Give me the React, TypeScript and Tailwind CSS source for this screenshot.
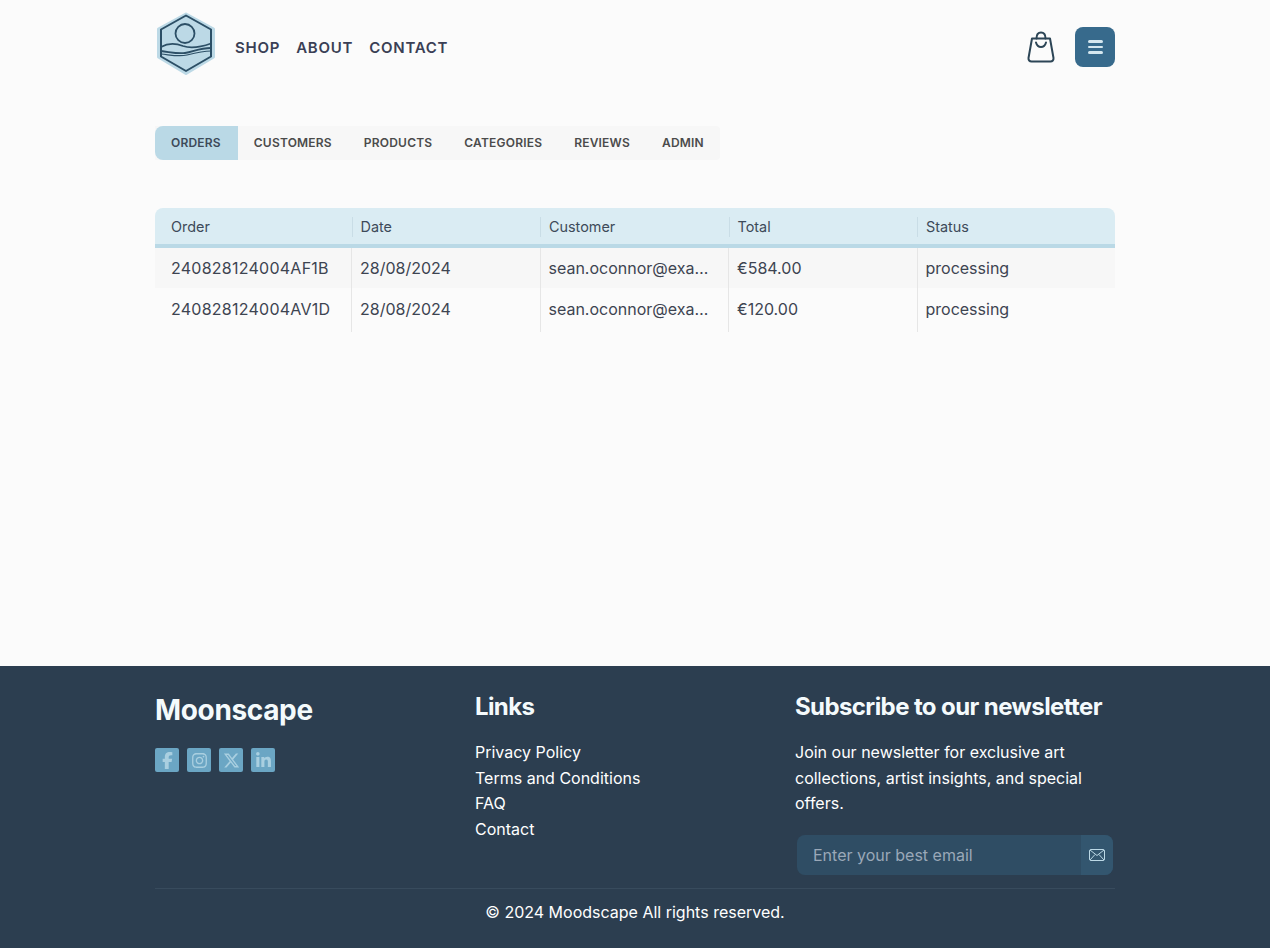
import React from 'react';
import { FaFacebookF, FaInstagram, FaLinkedinIn, FaXTwitter } from 'react-icons/fa6';

const tabs = ['Orders', 'Customers', 'Products', 'Categories', 'Reviews', 'Admin'];
const columns = [
  { label: 'Order', width: 'w-[196.5px]' },
  { label: 'Date', width: 'w-[188.5px]' },
  { label: 'Customer', width: 'w-[188.5px]' },
  { label: 'Total', width: 'w-[188.5px]' },
  { label: 'Status', width: '' },
];
const orders = [
  { id: '240828124004AF1B', date: '28/08/2024', customer: 'sean.oconnor@example.com', total: '€584.00', status: 'processing' },
  { id: '240828124004AV1D', date: '28/08/2024', customer: 'sean.oconnor@example.com', total: '€120.00', status: 'processing' },
];
const footerLinks = ['Privacy Policy', 'Terms and Conditions', 'FAQ', 'Contact'];

const Logo = () => (
  <svg className="mb-2" width="62" height="64" viewBox="0 0 62 64" fill="none">
    <path d="M31 3 L58.5 18 V46 L31 62.5 L3.5 46 V18 Z" fill="#bcd9e6" stroke="#bcd9e6" strokeWidth="3" strokeLinejoin="round" />
    <path d="M31 4.5 L56 18.5 V45.5 L31 60 L6 45.5 V18.5 Z" stroke="#2c4f66" strokeWidth="2" strokeLinejoin="round" />
    <circle cx="30" cy="22.5" r="9.5" stroke="#2c4f66" strokeWidth="1.8" />
    <path d="M6 36 C13 32 20 32 28 35 C37 38 46 36 56 32.5" stroke="#2c4f66" strokeWidth="1.8" />
    <path d="M6 40 C15 41 22 43 30 42 C38 41 44 37 56 37" stroke="#2c4f66" strokeWidth="1.8" />
    <path d="M6 43 C16 44 24 46 32 44 C40 42 48 40 56 40" stroke="#2c4f66" strokeWidth="1.2" />
  </svg>
);

const Bag = () => (
  <svg width="28" height="32" viewBox="0 0 28 32" fill="none" stroke="#2c4556" strokeWidth="2" strokeLinecap="round" strokeLinejoin="round">
    <path d="M5 7.5 H23 L26.5 27 C26.7 29 25.5 30.5 23.5 30.5 H4.5 C2.5 30.5 1.3 29 1.5 27 Z" />
    <path d="M9.5 7.5 C9.5 3.5 11.5 1.5 14 1.5 C16.5 1.5 18.5 3.5 18.5 7.5" />
    <path d="M9 11.5 C10 15 12 16 14 16 C16 16 18 15 19 11.5" />
  </svg>
);

const Mail = () => (
  <svg width="16" height="12" viewBox="0 0 16 12" fill="none" stroke="#bcd9e6" strokeWidth="1" strokeLinejoin="round">
    <rect x="0.5" y="0.5" width="15" height="11" rx="1.5" />
    <path d="M1 1 L8 6.5 L15 1 M1 11 L6 5.5 M15 11 L10 5.5" />
  </svg>
);

const SocialIcon = ({ children }: { children: React.ReactNode }) => (
  <a className="flex h-6 w-6 items-center justify-center rounded-[2px] bg-[#6ba6c4] text-[17px] text-[#a9cfe0]">
    {children}
  </a>
);

const App: React.FC = () => {
  return (
    <div className="flex min-h-[948px] flex-col bg-[#fbfbfb] font-['Inter',sans-serif] text-[#3d4451]">
      <header className="mx-auto flex h-[94px] w-[960px] items-center justify-between">
        <div className="flex items-center">
          <Logo />
          <nav className="ml-[18px] flex gap-4 pt-[2px] text-[15px] font-semibold tracking-[0.75px] text-[#3a3f55]">
            <a>SHOP</a>
            <a>ABOUT</a>
            <a>CONTACT</a>
          </nav>
        </div>
        <div className="flex items-center gap-5">
          <Bag />
          <button className="flex h-10 w-10 items-center justify-center rounded-lg bg-[#376a8c]">
            <span className="flex w-[15px] flex-col gap-[3px]">
              <span className="h-[2.5px] rounded-full bg-[#d5e7ef]" />
              <span className="h-[2.5px] rounded-full bg-[#d5e7ef]" />
              <span className="h-[2.5px] rounded-full bg-[#d5e7ef]" />
            </span>
          </button>
        </div>
      </header>

      <main className="mx-auto h-[572px] w-[960px] pt-8">
        <div className="inline-flex h-[34px] items-stretch rounded-r-sm bg-[#f7f7f7] text-[12px] font-semibold tracking-[0.2px] text-[#4b4b4b]">
          {tabs.map((tab, i) => (
            <a
              key={tab}
              className={`flex items-center uppercase ${i === 0 ? 'rounded-l-lg bg-[#bad9e6] pl-4 pr-[17px] text-[#3d4a59]' : 'px-4'}`}
            >
              {tab}
            </a>
          ))}
        </div>

        <table className="mt-12 w-full table-fixed text-left">
          <thead>
            <tr className="h-[38px] border-b-4 border-[#bad9e6] bg-[#daecf3] text-[14.4px] text-[#3d4a59]">
              {columns.map((col, i) => (
                <th
                  key={col.label}
                  className={`pt-[2px] font-normal ${col.width} ${i === 0 ? 'rounded-tl-lg pl-4' : 'pl-2'} ${i === 4 ? 'rounded-tr-lg' : ''}`}
                >
                  <span className={`block h-5 leading-5 ${i === 0 ? '' : '-ml-2 border-l border-[#c9dde6] pl-2'}`}>{col.label}</span>
                </th>
              ))}
            </tr>
          </thead>
          <tbody className="text-[16px] text-[#3d4451]">
            {orders.map((order, i) => {
              const pad = i === 0 ? 'pb-px' : 'pb-[3px]';
              return (
                <tr key={order.id} className={i === 0 ? 'h-[42px] bg-[#f7f7f7]' : 'h-[44px]'}>
                  <td className={`border-r border-[#e6e6e6] pl-4 tracking-[0.25px] ${pad}`}>{order.id}</td>
                  <td className={`border-r border-[#e6e6e6] pl-2 ${pad}`}>{order.date}</td>
                  <td className={`border-r border-[#e6e6e6] pl-2 pr-[14px] ${pad}`}>
                    <span className="block truncate">{order.customer}</span>
                  </td>
                  <td className={`border-r border-[#e6e6e6] pl-2 ${pad}`}>{order.total}</td>
                  <td className={`pl-2 ${pad}`}>{order.status}</td>
                </tr>
              );
            })}
          </tbody>
        </table>
      </main>

      <footer className="h-[282px] bg-[#2c3e50] text-white">
        <div className="mx-auto w-[960px]">
          <div className="grid h-[222px] grid-cols-3 pt-6">
            <div>
              <h2 className="text-[28px] font-bold leading-10 tracking-[-0.35px] text-[#f4fafc]">Moonscape</h2>
              <div className="mt-[18px] flex gap-2">
                <SocialIcon><FaFacebookF /></SocialIcon>
                <SocialIcon><FaInstagram /></SocialIcon>
                <SocialIcon><FaXTwitter /></SocialIcon>
                <SocialIcon><FaLinkedinIn /></SocialIcon>
              </div>
            </div>
            <div>
              <h3 className="pt-px text-[24px] font-bold leading-8 tracking-[-0.6px] text-[#f4fafc]">Links</h3>
              <ul className="mt-[17px] text-[16px] leading-[25.6px]">
                {footerLinks.map((link) => (
                  <li key={link}>{link}</li>
                ))}
              </ul>
            </div>
            <div>
              <h3 className="whitespace-nowrap pt-px text-[24px] font-bold leading-8 tracking-[-0.6px] text-[#f4fafc]">Subscribe to our newsletter</h3>
              <p className="mt-[17px] text-[16px] leading-[25.6px]">
                Join our newsletter for exclusive art collections, artist insights, and special offers.
              </p>
              <div className="ml-[2px] mt-[18px] flex h-10 w-[316px] overflow-hidden rounded-lg bg-[#2f4d64]">
                <input
                  className="min-w-0 flex-1 bg-transparent pl-4 text-[16px] outline-none placeholder:text-[#9aa8b8]"
                  placeholder="Enter your best email"
                />
                <span className="flex w-8 items-center justify-center bg-[#33566f]">
                  <Mail />
                </span>
              </div>
            </div>
          </div>
          <div className="border-t border-[#384b5d] pt-[11px] text-center text-[16px] leading-6">
            © 2024 Moodscape All rights reserved.
          </div>
        </div>
      </footer>
    </div>
  );
};

export default App;
